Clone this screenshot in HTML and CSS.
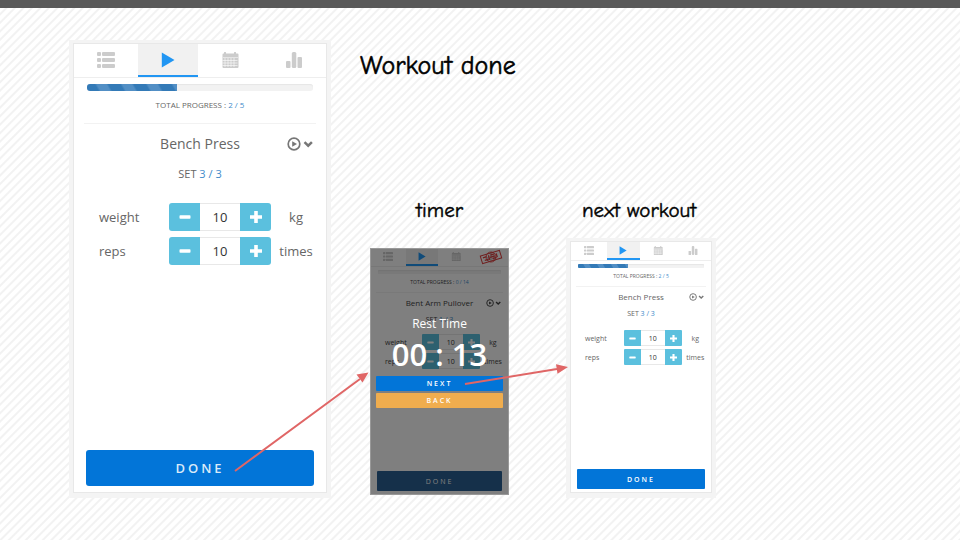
FILE: index.html
```html
<!DOCTYPE html>
<html lang="en">
<head>
<meta charset="utf-8">
<title>Workout done</title>
<link rel="stylesheet" href="styles.css">
</head>
<body>
<svg class="defs" aria-hidden="true">
  <symbol id="list" viewBox="0 0 18 16">
    <rect x="0" y="0" width="4" height="4" rx="1"/><rect x="5" y="0" width="13" height="4" rx="1"/>
    <rect x="0" y="6" width="4" height="4" rx="1"/><rect x="5" y="6" width="13" height="4" rx="1"/>
    <rect x="0" y="12" width="4" height="4" rx="1"/><rect x="5" y="12" width="13" height="4" rx="1"/>
  </symbol>
  <symbol id="play" viewBox="0 0 18 16"><path d="M2.800 0.400 15.500 8 2.800 15.600Z"/></symbol>
  <symbol id="calendar" viewBox="0 0 18 16">
    <path fill-rule="evenodd" d="M1.500 1.500H3V.5q0-.5.5-.5h1q.5 0 .5.500v1h8v-1q0-.5.5-.5h1q.5 0 .5.500v1h1.500q1 0 1 1V15q0 1-1 1h-14q-1 0-1-1V2.500q0-1 1-1ZM1 5v.6h16V5Z"/>
    <path class="calendar-grid" d="M1.500 8.500h15M1.500 11h15M1.500 13.500h15M4 6v9M7 6v9M10 6v9M13 6v9"/>
  </symbol>
  <symbol id="chart" viewBox="0 0 18 16">
    <rect x="1" y="9" width="4.500" height="7" rx="1"/><rect x="6.800" y="0" width="4.500" height="16" rx="1.500"/><rect x="12.500" y="5" width="4.500" height="11" rx="1"/>
  </symbol>
  <symbol id="more" viewBox="0 0 26 14">
    <circle cx="7" cy="7" r="5.800" fill="none" stroke="currentColor" stroke-width="1.700"/>
    <path d="M5.200 4.200 10 7 5.200 9.800Z"/>
    <path d="M17.500 5.200 21.200 8.700 24.900 5.200" fill="none" stroke="currentColor" stroke-width="2.500"/>
  </symbol>
  <symbol id="minus" viewBox="0 0 12 12"><rect x="0.500" y="4.200" width="11" height="3.600" rx="0.800"/></symbol>
  <symbol id="plus" viewBox="0 0 12 12"><path d="M4.200 0h3.600v4.200H12v3.600H7.800V12H4.200V7.800H0V4.200h4.200Z"/></symbol>
</svg>

<main class="slide">
  <h1 class="note note-title">Workout done</h1>
  <h2 class="note note-timer">timer</h2>
  <h2 class="note note-next">next workout</h2>

  <section class="phone phone-large">
    <nav class="tabs">
      <button class="tab" aria-label="List"><svg><use href="#list"/></svg></button>
      <button class="tab active" aria-label="Play"><svg><use href="#play"/></svg></button>
      <button class="tab" aria-label="Calendar"><svg><use href="#calendar"/></svg></button>
      <button class="tab" aria-label="Statistics"><svg><use href="#chart"/></svg></button>
    </nav>
    <div class="progress"><div class="bar" style="width:40%"></div></div>
    <p class="total">TOTAL PROGRESS : <b>2 / 5</b></p>
    <div class="exercise"><h3>Bench Press</h3><button class="more" aria-label="Exercise options"><svg><use href="#more"/></svg></button></div>
    <p class="set">SET <b>3 / 3</b></p>
    <div class="fields">
      <label for="weight-1">weight</label>
      <div class="stepper"><button aria-label="Less weight"><svg><use href="#minus"/></svg></button><input id="weight-1" value="10"><button aria-label="More weight"><svg><use href="#plus"/></svg></button></div>
      <span class="unit">kg</span>
      <label for="reps-1">reps</label>
      <div class="stepper"><button aria-label="Fewer reps"><svg><use href="#minus"/></svg></button><input id="reps-1" value="10"><button aria-label="More reps"><svg><use href="#plus"/></svg></button></div>
      <span class="unit">times</span>
    </div>
    <button class="done">DONE</button>
  </section>

  <section class="phone phone-small phone-timer">
    <nav class="tabs">
      <button class="tab" aria-label="List"><svg><use href="#list"/></svg></button>
      <button class="tab active" aria-label="Play"><svg><use href="#play"/></svg></button>
      <button class="tab" aria-label="Calendar"><svg><use href="#calendar"/></svg></button>
      <button class="tab" aria-label="Statistics"><svg><use href="#chart"/></svg></button>
    </nav>
    <div class="progress"></div>
    <p class="total">TOTAL PROGRESS : <b>0 / 14</b></p>
    <div class="exercise"><h3>Bent Arm Pullover</h3><button class="more" aria-label="Exercise options"><svg><use href="#more"/></svg></button></div>
    <p class="set">SET <b>1 / 3</b></p>
    <div class="fields">
      <label for="weight-2">weight</label>
      <div class="stepper"><button aria-label="Less weight"><svg><use href="#minus"/></svg></button><input id="weight-2" value="10"><button aria-label="More weight"><svg><use href="#plus"/></svg></button></div>
      <span class="unit">kg</span>
      <label for="reps-2">reps</label>
      <div class="stepper"><button aria-label="Fewer reps"><svg><use href="#minus"/></svg></button><input id="reps-2" value="10"><button aria-label="More reps"><svg><use href="#plus"/></svg></button></div>
      <span class="unit">times</span>
    </div>
    <button class="done">DONE</button>
    <svg class="stamp" viewBox="0 0 24 16" aria-hidden="true">
      <g transform="rotate(-17 12 8)" fill="none" stroke="currentColor">
        <rect x="2" y="4" width="20" height="8" stroke-width="1"/>
        <path d="M4 6.500h4M5 9.500h4M10 5.500v5M12 6h4M11 8h5M13 10h4M18 6v4" stroke-width="1.300"/>
        <circle cx="12" cy="8" r="5" stroke-width=".8"/>
      </g>
    </svg>
    <div class="rest">
      <p class="rest-label">Rest Time</p>
      <p class="clock">00 : 13</p>
      <button class="next">NEXT</button>
      <button class="back">BACK</button>
    </div>
  </section>

  <section class="phone phone-small phone-next">
    <nav class="tabs">
      <button class="tab" aria-label="List"><svg><use href="#list"/></svg></button>
      <button class="tab active" aria-label="Play"><svg><use href="#play"/></svg></button>
      <button class="tab" aria-label="Calendar"><svg><use href="#calendar"/></svg></button>
      <button class="tab" aria-label="Statistics"><svg><use href="#chart"/></svg></button>
    </nav>
    <div class="progress"><div class="bar" style="width:40%"></div></div>
    <p class="total">TOTAL PROGRESS : <b>2 / 5</b></p>
    <div class="exercise"><h3>Bench Press</h3><button class="more" aria-label="Exercise options"><svg><use href="#more"/></svg></button></div>
    <p class="set">SET <b>3 / 3</b></p>
    <div class="fields">
      <label for="weight-3">weight</label>
      <div class="stepper"><button aria-label="Less weight"><svg><use href="#minus"/></svg></button><input id="weight-3" value="10"><button aria-label="More weight"><svg><use href="#plus"/></svg></button></div>
      <span class="unit">kg</span>
      <label for="reps-3">reps</label>
      <div class="stepper"><button aria-label="Fewer reps"><svg><use href="#minus"/></svg></button><input id="reps-3" value="10"><button aria-label="More reps"><svg><use href="#plus"/></svg></button></div>
      <span class="unit">times</span>
    </div>
    <button class="done">DONE</button>
  </section>

  <svg class="arrows" width="960" height="540" viewBox="0 0 960 540" aria-hidden="true">
    <path class="line" d="M235 471 360 379M465 384 557 369"/>
    <path class="head" d="M368.500 372.500 362.500 382.500 356.500 374.500ZM568 367 557.500 373.800 556 364.200Z"/>
  </svg>
</main>
</body>
</html>
```
FILE: styles.css
```css
* { box-sizing: border-box; }

body {
  margin: 0;
  font-family: "Open Sans", "Noto Sans", sans-serif;
  color: #666;
}

h1, h2, h3, p { margin: 0; font-weight: 400; }

button, input {
  margin: 0;
  padding: 0;
  border: 0;
  font: inherit;
  color: inherit;
  background: none;
}

svg { display: block; fill: currentColor; }
.defs { position: absolute; width: 0; height: 0; }

.slide {
  position: relative;
  min-height: 100vh;
  overflow: hidden;
  border-top: 8px solid #595959;
  background: repeating-linear-gradient(135deg, #fff 0, #fff 3px, #f2f2f2 4px, #f2f2f2 5px, #fff 6px);
}

/* Handwritten captions on the canvas */
.note {
  position: absolute;
  color: #000;
  font-family: "Comic Sans MS", "Comic Neue", cursive;
  font-size: 21px;
  line-height: 28px;
  white-space: nowrap;
  -webkit-text-stroke: 1px #000;
  -webkit-text-stroke-width: thin;
}
.note-title { left: 360px; top: 40px; font-size: 26px; line-height: 36px; }
.note-timer { left: 416px; top: 188px; }
.note-next { left: 582px; top: 188px; }

/* Phone mock-up, sized by the variables of each variant */
.phone {
  position: absolute;
  display: flex;
  flex-direction: column;
  border: 1px solid #e8e8e8;
  background: #fff;
  box-shadow: 0 1px 0 4px #f4f4f4;
}

.phone-large {
  left: 73px; top: 35px; width: 254px; min-height: 450px;
  --pad: 13px;
  --tabs: 34px; --mark: 2px; --icon-w: 18px; --icon-h: 16px;
  --bar-gap: 6px; --bar: 7px; --stripe: 15px;
  --total: 8px; --total-line: 28px; --total-gap: 4px;
  --text: 14px; --title-line: 39px;
  --set: 11px; --set-line: 22px; --set-gap: 18px;
  --label: 13px; --row: 28px; --row-gap: 6px;
  --indent: 25px; --stepper: 102px; --step: 31px; --glyph: 12px;
  --more-w: 26px; --more-h: 14px;
  --done: 36px; --done-text: 13px; --done-track: 3px; --radius: 3px;
}

.phone-small {
  width: 142px; min-height: 252px;
  --pad: 7px;
  --tabs: 19px; --mark: 2px; --icon-w: 10px; --icon-h: 9px;
  --bar-gap: 3px; --bar: 4px; --stripe: 8px;
  --total: 5px; --total-line: 16px; --total-gap: 2px;
  --text: 8px; --title-line: 20px;
  --set: 7px; --set-line: 14px; --set-gap: 9px;
  --label: 7px; --row: 16px; --row-gap: 3px;
  --indent: 14px; --stepper: 58px; --step: 17px; --glyph: 7px;
  --more-w: 15px; --more-h: 8px;
  --done: 20px; --done-text: 7px; --done-track: 2px; --radius: 1px;
}
.phone-next { left: 570px; top: 233px; }
.phone-timer {
  left: 370px; top: 240px; width: 139px; min-height: 247px;
  --tabs: 18px; --set-gap: 7px;
  border-color: #999;
  box-shadow: none;
  color: #444;
}

.tabs {
  display: grid;
  grid-template-columns: 64fr 60fr 64fr 64fr;
  height: var(--tabs);
  border-bottom: 1px solid #eee;
}
.tab { display: grid; place-items: center; color: #ccc; border-bottom: var(--mark) solid transparent; }
.tab svg { width: var(--icon-w); height: var(--icon-h); }
.tab.active { color: #2196f3; background: #f1f1f1; border-color: #2196f3; }
.calendar-grid { fill: none; stroke: #fff; stroke-width: .6; }

.progress {
  height: var(--bar);
  margin: var(--bar-gap) var(--pad) 0;
  border-radius: var(--radius);
  overflow: hidden;
  background: #f2f2f2;
  box-shadow: inset 0 1px 1px #e6e6e6;
}
.bar {
  height: 100%;
  background: repeating-linear-gradient(60deg, #337ab7 0, #337ab7 10px, #528fc5 12px, #528fc5 20px, #337ab7 22px);
}
.phone-small .bar {
  background: repeating-linear-gradient(60deg, #337ab7 0, #337ab7 6px, #528fc5 7px, #528fc5 11px, #337ab7 12px);
}

.total {
  font-size: var(--total);
  line-height: var(--total-line);
  margin: 0 10px;
  padding-bottom: var(--total-gap);
  border-bottom: 1px solid #f2f2f2;
  text-align: center;
}
.phone-small .total { margin: 0 5px; }
b { font-weight: 400; color: #428bca; }

.exercise {
  display: grid;
  grid-template-columns: 1fr auto 1fr;
  align-items: center;
  padding: 0 var(--pad);
}
.exercise h3 { grid-column: 2; font-size: var(--text); line-height: var(--title-line); }
.more { justify-self: end; color: #777; }
.phone-timer .more { color: #444; }
.more svg { width: var(--more-w); height: var(--more-h); }

.set {
  font-size: var(--set);
  line-height: var(--set-line);
  text-align: center;
  margin-bottom: var(--set-gap);
}

.fields {
  display: grid;
  grid-template-columns: 70fr var(--stepper) 44fr;
  row-gap: var(--row-gap);
  align-items: center;
  padding-left: var(--indent);
  padding-right: calc(var(--pad) - 2px);
  font-size: var(--label);
}
.unit { text-align: center; padding-left: var(--row-gap); }

.stepper {
  display: flex;
  height: var(--row);
  border-radius: var(--radius);
  overflow: hidden;
}
.stepper button {
  flex: 0 0 var(--step);
  display: grid;
  place-items: center;
  color: #fff;
  background: #5bc0de;
}
.stepper svg { width: var(--glyph); height: var(--glyph); }
.stepper input {
  flex: 1;
  min-width: 0;
  text-align: center;
  color: #333;
  background: #fff;
  border: solid #e8e8e8;
  border-width: 1px 0;
}

.done, .next, .back {
  border-radius: var(--radius);
  color: #fff;
  font-size: var(--done-text);
  font-weight: 600;
  letter-spacing: var(--done-track);
}
.done {
  height: var(--done);
  margin: auto calc(var(--pad) - 1px) 6px;
  color: #d9eaf9;
  background: #0275d8;
}
.phone-small .done { margin-bottom: 3px; }
.phone-timer .done { background: #2a6094; font-weight: 400; color: #fff; }
.phone-next .done { color: #fff; }

.stamp {
  position: absolute;
  right: 5px;
  top: 0;
  width: 24px;
  height: 16px;
  color: #e04040;
}

/* Rest timer over the dimmed screen */
.rest {
  position: absolute;
  inset: 0;
  display: flex;
  flex-direction: column;
  padding: 67px 5px 0;
  background: rgba(0, 0, 0, .5);
  color: #fff;
  text-align: center;
}
.rest-label { font-size: 12px; line-height: 16px; }
.clock { font-size: 31px; line-height: 44px; font-weight: 600; }
.next, .back { height: 15px; }
.next { background: #0275d8; }
.back { background: #f0ad4e; margin-top: 2px; }

.arrows { position: absolute; left: 0; top: -8px; pointer-events: none; color: #e06666; }
.line { fill: none; stroke: currentColor; stroke-width: 2; }
```
